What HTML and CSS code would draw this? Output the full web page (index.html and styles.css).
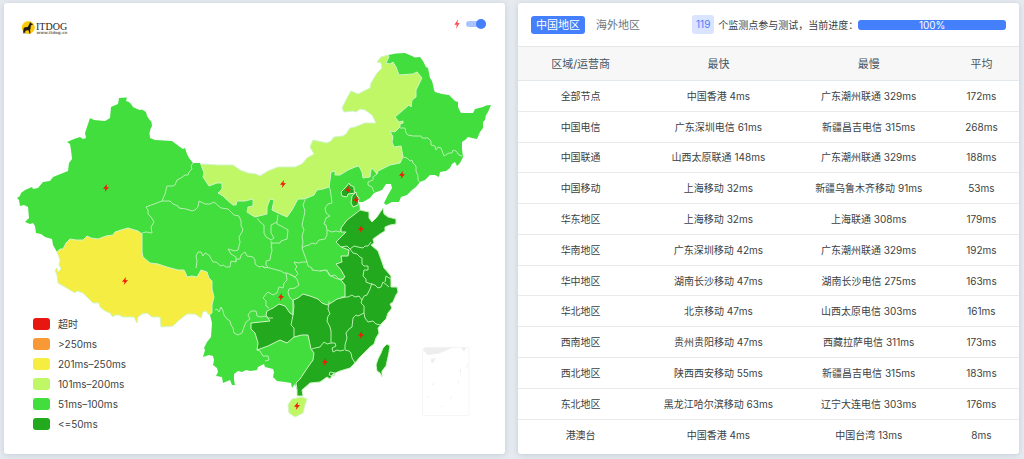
FILE: index.html
```html
<!DOCTYPE html>
<html lang="zh-CN">
<head>
<meta charset="utf-8">
<title>ITDOG</title>
<link rel="stylesheet" href="styles.css">
</head>
<body>
<main class="layout">
<section class="card map-card">
<svg class="map" viewBox="4 3 501 451" role="img" aria-label="ITDOG">
<defs>
<path id="bolt" d="M1-4-3 .8-.5.7-1.200 4 3-.9.5-.8z"/>
</defs>
<g class="logo">
<circle cx="28.3" cy="27.5" r="6.5" fill="#fccb0b"/>
<path d="M30.2 22l.8 1.3 1.8.8-.4.9-1.5.3-.3 2.7-.5 2 .3 3.4h-1l-.8-3.2-2.6.2-.9 1.4.3 1.8h-.8l-.6-2-.6 2-.6.1.5-3 .4-2.8 1.4-.7 2.6-.1 1.4-2.5z" fill="#1c1a12"/>
<text class="logo-name" x="36" y="29.5">ITDOG</text>
<text class="logo-url" x="36.5" y="34">www.itdog.cn</text>
</g>
<path class="ok" d="M119 98L127 97.500 126 101 129 102 131 104 133 107 137 109 140 110 142 109.500 146 112 147 116 149 119 151.500 122 152 126 150.500 129 149.500 133 150 138 155 140 164 140.500 172 141 176 144 180 147 183 149 185 148 187 154 189 158 193 163 200 163 205 175 262 196 325 165 350 150 380 140 385 125 392 115 405 95 412 80 393 80 388 68 384 62 388 55 396 53.500 405 53 412 56 415 57.500 420 57 423 61 426 67 428 68 429 73 430 78 432 81 433 85 434 90 435 92 442 94 449 95 453 99 455 101 458 102 458 107 461 113 473 113 475 109 483 107 486 105.500 491 105 488 112 486 115 485 120 483 122 483 128 480 132 477 139 472 138 468 137 465 140 462 142 462 149 463 157 460 163 457 166 455 162 452 164 450 168 446 171 440 172 439 177 435 175 430 175 425 180 420 182 416 187 412 190 407 195 401 197 399 202 392 202 386 205 384 203 388 195 392 188 391 184 386 184 382 190 374 193 370 198 363 202 359 202 360 210 369 212 369 218 372 222 377 217 383 208 384 214 388 217 396 219 396 224 390 225 385 227 385 231 380 234 373 239 374 243 371 245 378 251 382 262 384 268 391 276 391 287 397 287 398 292 396 295 393 302 390 304 392 308 388 313 386 319 382 323 378 328 379 333 376 338 374 344 370 347 360 357 354 364 350 368 340 371 333 374 330 379 327 377 320 382 310 383 302 390 303 396 297 396 297 390 295 384 292 388 291 383 285 382 277 381 273 377 274 372 273 369 265 367 264 364 258 367 257 370 250 371 246 370 242 372 238 371 234 374 234 380 235 385 232 385 230 380 223 383 222 377 216 376 218 372 217 368 213 365 214 360 213 356 209 355 203 357 205 350 204 348 207 342 211 337 212 323 210 315 207 311 195 290 125 275 110 250 57 252 53 245 52 239 45 237 41 234 36 233 35 226 33 223 30 224 25 222 29 218 28 207 24 205 20 206 19 200 17 198 20 196 21 193 25 190 32 187 33 189 38 188 43 182 50 181 53 177 68 171 69 163 72 159 71 150 70 144 67 142 74 139 80 137 83 139 86 138 85 133 90 118 94 120 105 121 110 118 111 107 118 104z"/>
<path class="slow" d="M201 164L218 165 233 165 240 170 248 173 256 174 260 176 268 171 278 167 295 167 302 164 307 158 314 154 310 147 313 140 327 143 331 141 334 137 343 136 346 134 350 128 355 127 365 123 376 123 372 115 365 110 360 109 356 112 353 111 344 112 342 108 347 98 351 91 358 94 370 88 371 83 377 73 382 68 381 63 377 62 381 57 388 55 389 57 386 63 390 64 393 62 396 67 399 75 413 74 417 72 422 78 416 90 416 97 412 100 411 107 409 105 395 117 399 122 403 121 403 123 400 124 400 127 395 132 390 131 393 137 392 142 394 147 401 146 403 157 400 163 390 165 378 171 377 174 372 168 371 170 370 177 363 178 362 172 359 166 355 167 348 170 340 175 335 175 335 171 331 172 330 180 329 187 323 189 317 190 314 195 307 198 303 199 298 199 292 210 287 217 278 213 272 210 274 200 270 199 267 207 267 214 255 217 250 214 247 212 248 207 253 206 253 199 245 201 237 201 236 205 233 205 227 200 223 196 218 193 222 189 222 183 217 183 209 186 203 177 204 173z"/>
<path class="poor" d="M57 252L60 249 63 249 66 243 70 239 76 240 83 240 87 236 91 238 98 239 106 236 113 235 115 232 121 230 128 228 138 231 142 234 142 252 143 257 150 263 158 264 167 267 178 270 184 270 186 274 187 277 192 276 197 277 201 270 207 272 209 278 212 281 212 289 214 297 212 305 212 313 209 315 206 311 203 312 201 318 195 314 187 314 178 321 173 326 161 327 160 317 152 317 147 313 142 314 138 317 137 323 134 317 128 317 123 317 119 315 115 315 113 317 110 313 105 311 100 307 99 303 93 303 88 298 83 293 77 291 75 293 65 287 58 283 57 275 55 270 57 268 58 272 61 269 59 265 60 260z"/>
<path class="fast" d="M360 210L369 212 369 218 372 222 377 217 383 208 384 214 388 217 396 219 396 224 390 225 385 227 385 231 380 234 373 239 374 243 371 245 378 251 382 262 384 268 391 276 391 287 397 287 398 292 396 295 393 302 390 304 392 308 388 313 386 319 382 323 378 328 379 333 376 338 374 344 370 347 360 357 354 364 350 368 340 371 333 374 330 379 327 377 320 382 310 383 302 390 303 396 297 396 297 390 296 383 300 379 308 367 313 360 314 353 311 349 308 335 302 335 294 337 287 343 280 340 268 346 257 350 258 343 255 333 251 329 251 323 270 321 266 315 267 311 273 308 279 304 285 306 290 313 293 315 293 300 298 298 303 294 310 296 318 299 322 303 327 305 331 303 337 299 345 297 345 285 341 280 345 277 341 270 336 264 342 262 341 256 348 256 349 250 341 247 336 242 346 232 341 232 341 228 347 220 355 214z"/>
<path class="fast" d="M349 183l1 2 4 2v3l1 3-7 1-1 3-5-1-1-4 5-5zM356 192l1 4 2 2-1 7-5 2-2-4 1-7z"/>
<path class="fast" d="M387 344l3 2-1 6-1 5-2 9-4 5v6l-2-4-3-2-1-6 2-6 3-6 2-5z"/>
<path class="slow" d="M302 397l5 2-2 6-2 8-8 4-6-4-1-8 4-6z"/>
<g class="borders">
<path d="M193 163l-2 3 1 3-3 3-1 3-3 0-4 3-4 2-2 5-2 1-6 0-2 8-3 7-16 6 2 3 0 4 3 3 3 5-3 5 1 6-6-1-4 1M162 201l8 0 3 3 5 2 1 2 7 1 6 2 3-1 3-3 1-6 6 3 5 0 4-2 7 6 7 1 6 6 5 1 2 5 0 5 2 3-1 3-3 5 1 5-2 8-3 1-7-2 3 5 5 3 0 5-5-1-1 6-4 0-3-2-2 1-5-4-3 0-4-7-4-2-2 3-2-4h-3l-2 4 1 5-1 7M235 262l2-3 3 0 1-4 4-3 2 4 6 1 2 3v4l4 3 4-1 1 2 4-1-2-2v-4l4-1 1-6 1-3-1-10M271 240l-5-3-2-4v-8l-4-3-3-4M271 240l3-2-3-5v-8l6-3 1-7M277 222l0 2 6 3 5 3-1 9-6 2-1 2-8 0-1 5M263 267l7 1 7 2 4 1 3 2 3 0 6 3 4 3 2 6-4 3-6 1-1 3 1 4 4 5M286 273l1 7-3 3-1 5-4-1-2 6-4 2-5-3-2 2-3 4 3 3 0 5 3 2M290 274l5 3 3-3-3-5 2-2-3-5 5 1 3-1 5 0-5-14 1-6-1-6 2-6-2-5 2-9 1-5-2-6 2-5 1-4M302 248l3-2 4-1 3-2 4 1 3-4 6-1 2-4v-5l-1-5-2-1 2-6 4-2-4-3-1-5 3-4 4-1-1-8-1-6-1-3M327 230l5 2 4-1 4 1 1-3M307 262l1 4 4 2 0 2 8 1 5-1 4 3 1 3 5-1 4 4 5 0M320 271l7-1 2 5 6 3 6 2"/>
<path d="M336 242l5 5 6-1 3 3 4-3 4 1 5 1 2-2 3 0 3-4M350 249l3 4 4 1 3 3 2 1 0 6 2 2 4 0v4l-4 0-1 6 3 3 0 3 5 2 4 1 3 3 3-1 2-5 6 5M385 282l1-6 5 3M372 283l-2 6-3 6-3 1-2 4-3-4-4 1-3-2-4 2-4 0-3 0M362 300l-1 3 3 3 0 7 1 5 3 4 5-1 3 3 5 1M364 313l-6 3-2-1-3 3-1 9-3 2-3 4 1 5-2 7 0 5 4 1 2 2 1 5 3 5M344 350l-4 1-3-1-4 2-1-4 4-2-1-3-4 0v-12l-1-4-3-6 1-5 2-2-2-5 1-6 0-2M331 343l-4 1-3-2-4 5-5 1-3 1M293 300l1 6-1 9-2 10 3 3v9M215 310l2-1 2 3 2-5 2 4 1 4 3 4 3 2 1 4 2 3 1 5 4 2 4-2 2-6 2-5 4-3-2-4 3-4h5l1 5 4 1 4-1 3 2 5 0M257 350l3 1 3 5 5 0 1 4-4 1M329 375l1-3 5 1-1 3z"/>
<path d="M400 128l5 0 1 5 2 2 5 1 3 0 5 0 1 2 6 0 3 3 0 4 4 1 1 4 2-3 3 1 3 8 5-3 3 0 1-3 3 1 3 4 3 1M403 157l4 1 3 3 2-1 1 3 3 3 0 5 2 5 0 4 2 3M377 174l-4 3 0 3-5 2 0 3 4 2 2 5"/>
</g>
<g class="bolts">
<use href="#bolt" x="106" y="188"/><use href="#bolt" x="125" y="281"/><use href="#bolt" x="283" y="184"/><use href="#bolt" x="402" y="175"/><use href="#bolt" x="348" y="190"/><use href="#bolt" x="356" y="200"/><use href="#bolt" x="361" y="229"/><use href="#bolt" x="281" y="297"/><use href="#bolt" x="361" y="335"/><use href="#bolt" x="325" y="362"/><use href="#bolt" x="297" y="406"/>
</g>
<g class="inset">
<path class="inset-frame" d="M425 347.500h44v68h-46.500v-66z"/>
<path d="M425 347.500h28l-14 6-11 1.500-5-5zM461 347.500h5l-2 4zM431 359l5-1-3 5-2-1zM460 369l1 0v4h-1zM458 380l1 0-1 5zM431 385l4-3-2 3zM427 395l2 3-1 0zM453 394l-2 5-1 0zM440 407l4-1-1 1zM465 368l4-6-2 5z"/>
</g>
</svg>
<label class="toggle">
<svg class="toggle-bolt" viewBox="-4 -5 8 10" aria-hidden="true"><path d="M1.300-5-2.600.8-.2.700-1 5 2.600-1 .3-.9z"/></svg>
<input class="switch" type="checkbox" checked aria-label="ITDOG">
</label>
<ul class="legend">
<li><i class="swatch c-timeout"></i>超时</li>
<li><i class="swatch c-250"></i>&gt;250ms</li>
<li><i class="swatch c-201"></i>201ms–250ms</li>
<li><i class="swatch c-101"></i>101ms–200ms</li>
<li><i class="swatch c-51"></i>51ms–100ms</li>
<li><i class="swatch c-50"></i>&lt;=50ms</li>
</ul>
</section>
<section class="card data-card">
<header class="bar">
<button class="tab active" type="button">中国地区</button>
<button class="tab" type="button">海外地区</button>
<div class="status">
<span class="count">119</span>
<span class="status-text">个监测点参与测试，当前进度：</span>
<div class="progress" role="progressbar" aria-valuenow="100">100%</div>
</div>
</header>
<table class="stats">
<thead><tr><th class="w-area">区域/运营商</th><th class="w-node">最快</th><th class="w-node">最慢</th><th>平均</th></tr></thead>
<tbody>
<tr><td>全部节点</td><td>中国香港 4ms</td><td>广东潮州联通 329ms</td><td>172ms</td></tr>
<tr><td>中国电信</td><td>广东深圳电信 61ms</td><td>新疆昌吉电信 315ms</td><td>268ms</td></tr>
<tr><td>中国联通</td><td>山西太原联通 148ms</td><td>广东潮州联通 329ms</td><td>188ms</td></tr>
<tr><td>中国移动</td><td>上海移动 32ms</td><td>新疆乌鲁木齐移动 91ms</td><td>53ms</td></tr>
<tr><td>华东地区</td><td>上海移动 32ms</td><td>上海联通 308ms</td><td>179ms</td></tr>
<tr><td>华南地区</td><td>广东深圳移动 42ms</td><td>广东潮州联通 329ms</td><td>192ms</td></tr>
<tr><td>华中地区</td><td>湖南长沙移动 47ms</td><td>湖南长沙电信 275ms</td><td>163ms</td></tr>
<tr><td>华北地区</td><td>北京移动 47ms</td><td>山西太原电信 303ms</td><td>161ms</td></tr>
<tr><td>西南地区</td><td>贵州贵阳移动 47ms</td><td>西藏拉萨电信 311ms</td><td>173ms</td></tr>
<tr><td>西北地区</td><td>陕西西安移动 55ms</td><td>新疆昌吉电信 315ms</td><td>183ms</td></tr>
<tr><td>东北地区</td><td>黑龙江哈尔滨移动 63ms</td><td>辽宁大连电信 303ms</td><td>176ms</td></tr>
<tr><td>港澳台</td><td>中国香港 4ms</td><td>中国台湾 13ms</td><td>8ms</td></tr>
</tbody>
</table>
</section>
</main>
</body>
</html>
```
FILE: styles.css
```css
* { box-sizing: border-box; }
body {
  margin: 0;
  background: #e6eaf0;
  color: #3c3f43;
  font: 10px/20px Inter, "Noto Sans CJK SC", sans-serif;
}
.layout {
  display: grid;
  grid-template-columns: 1fr 1fr;
  gap: 13px;
  padding: 3px 5px 5px 4px;
}
.card {
  background: #fff;
  border-radius: 3px;
  box-shadow: 0 1px 6px #c3ccd6;
}
.map-card { position: relative; }
.map { display: block; width: 100%; height: auto; }
.ok { fill: #41de3e; }
.slow { fill: #bff766; }
.poor { fill: #f6ed43; }
.fast { fill: #23a91d; }
.slow, .poor, .fast { stroke: #d2f5c4; stroke-width: 1; stroke-linejoin: round; }
.borders { fill: none; stroke: #b5efaf; stroke-width: 1; stroke-linejoin: round; }
.bolts { fill: #f5170c; }
.inset { fill: #eee; }
.inset-frame { fill: none; stroke: #f6f6f6; }
.logo-name { font: 10px "Liberation Serif", serif; fill: #29221e; }
.logo-url { font: bold 4px "DejaVu Sans", sans-serif; fill: #777; }
.toggle {
  position: absolute;
  top: 16px;
  right: 19px;
  display: flex;
  align-items: center;
  gap: 5px;
  height: 10px;
}
.toggle-bolt { width: 8px; height: 10px; fill: #ff4a4f; }
.switch {
  appearance: none;
  position: relative;
  width: 20px;
  height: 6px;
  margin: 0;
  border-radius: 3px;
  background: #abc4ff;
}
.switch::before {
  content: "";
  position: absolute;
  top: -2px;
  right: 0;
  width: 10px;
  height: 10px;
  border-radius: 50%;
  background: #4580fc;
}
.legend {
  position: absolute;
  left: 29px;
  bottom: 20px;
  margin: 0;
  padding: 0;
  list-style: none;
}
.legend li { display: flex; align-items: center; gap: 8px; }
.swatch { width: 17px; height: 12px; border-radius: 3px; }
.c-timeout { background: #e71611; }
.c-250 { background: #f79a36; }
.c-201 { background: #f6ed43; }
.c-101 { background: #bff766; }
.c-51 { background: #41de3e; }
.c-50 { background: #23a91d; }
.data-card {
  display: flex;
  flex-direction: column;
  padding-bottom: 4px;
}
.bar {
  display: flex;
  align-items: center;
  height: 43px;
  padding: 0 13px;
}
.tab {
  border: 0;
  padding: 0 5px;
  border-radius: 3px;
  background: none;
  color: #6c757d;
  font: 11px/18px Inter, "Noto Sans CJK SC", sans-serif;
}
.tab.active { background: #4580fc; color: #fff; margin-right: 6px; }
.status {
  flex: 1;
  display: flex;
  align-items: center;
  margin-left: 47px;
}
.count {
  padding: 0 4px;
  border-radius: 3px;
  background: #dae3ff;
  color: #4580fc;
  line-height: 19px;
}
.status-text { margin-left: 4px; white-space: nowrap; }
.progress {
  flex: 1;
  border-radius: 3px;
  background: #4580fc;
  color: #fff;
  line-height: 10px;
  text-align: center;
}
.stats {
  flex: 1;
  width: 100%;
  border-collapse: collapse;
  table-layout: fixed;
  text-align: center;
}
.stats th {
  height: 34px;
  padding: 0;
  border-top: 1px solid #e6e9ec;
  border-bottom: 1px solid #e3e8ed;
  background: #f7f7f7;
  color: #465560;
  font-size: 11px;
  font-weight: 400;
}
.stats td { height: 30px; padding: 0; border-bottom: 1px solid #e8eaed; white-space: nowrap; }
.stats tr:last-child td { border-bottom: 0; }
.w-area { width: 25%; }
.w-node { width: 30%; }
```
